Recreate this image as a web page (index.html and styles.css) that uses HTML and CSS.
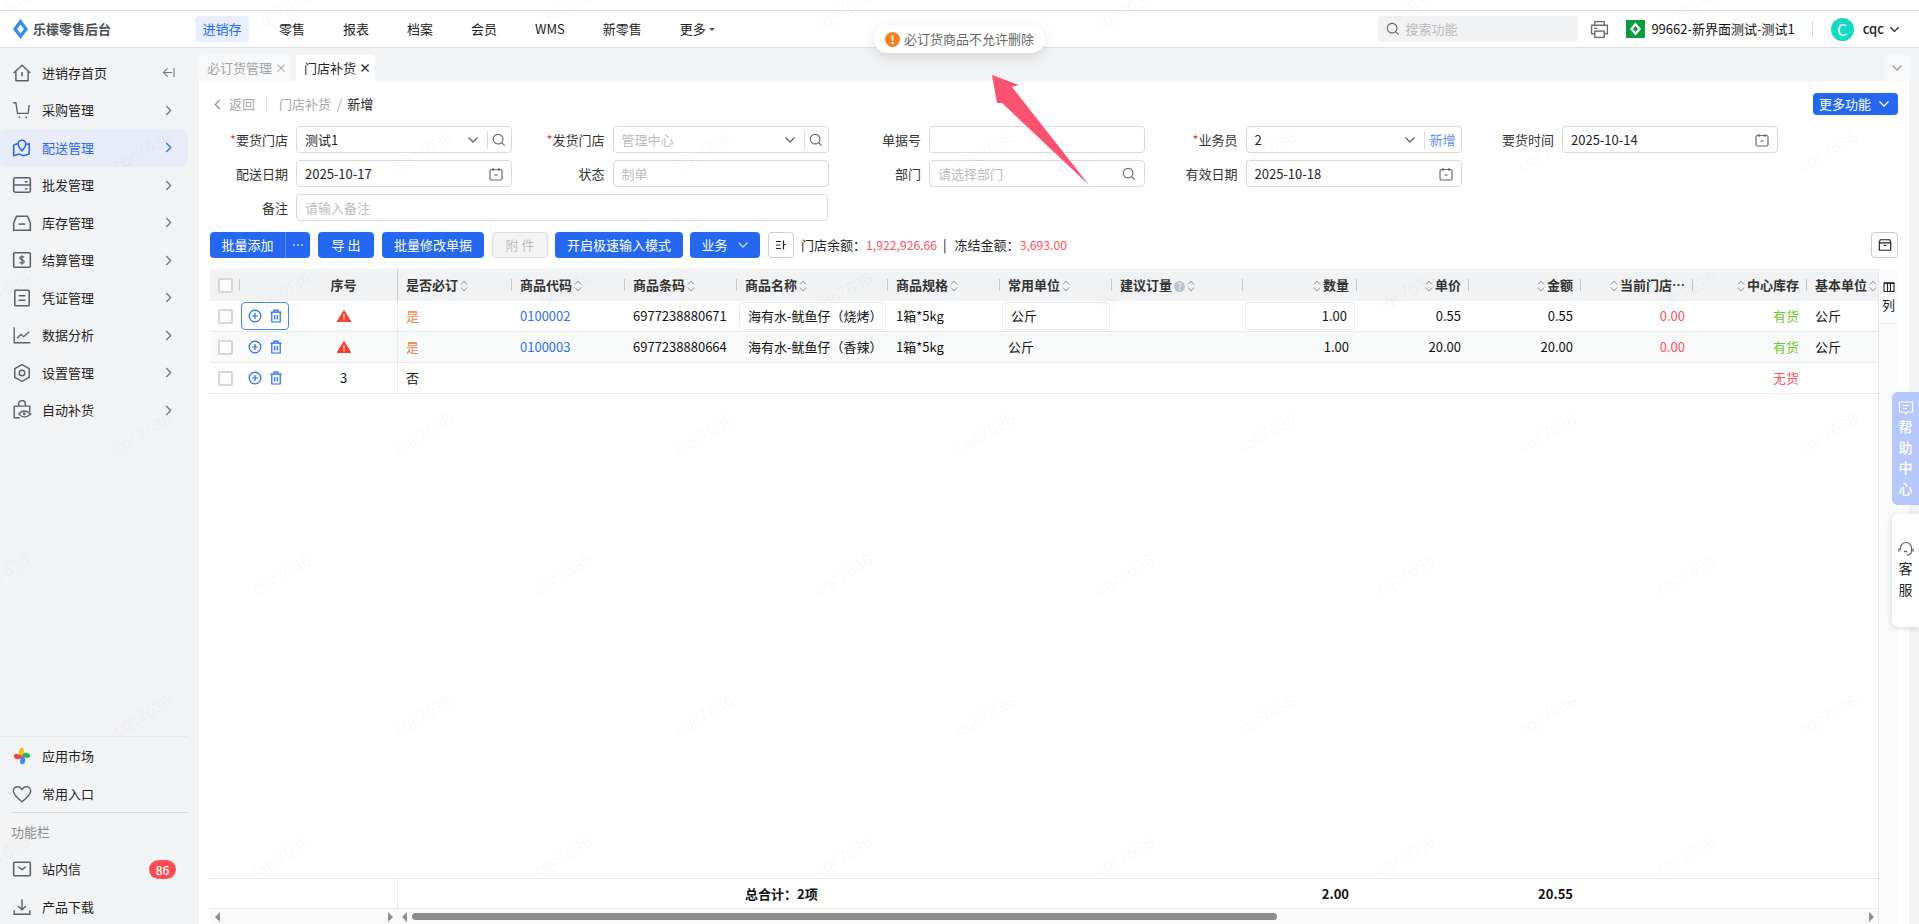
FILE: index.html
```html
<!DOCTYPE html>
<html lang="zh-CN">
<head>
<meta charset="utf-8">
<title>乐檬零售后台</title>
<link rel="stylesheet" href="styles.css">
</head>
<body>
<svg class="sprite" xmlns="http://www.w3.org/2000/svg">
  <symbol id="i-home" viewBox="0 0 18 18"><path d="M1.5 9 9 2l7.5 7M3.5 7.5V16h11V7.5" fill="none" stroke="currentColor" stroke-width="1.3" stroke-linejoin="round"/><path d="M9 8v4" stroke="currentColor" stroke-width="1.4"/></symbol>
  <symbol id="i-cart" viewBox="0 0 18 18"><path d="M1 2.500h2.500l1.500 9.500h9.500l1-7.500" fill="none" stroke="currentColor" stroke-width="1.200"/><path d="M6 15.500h1.500M12 15.500h1.500" stroke="currentColor" stroke-width="1.500"/></symbol>
  <symbol id="i-map" viewBox="0 0 18 18"><path d="M5 5 1.500 6.500V16l5-1.500 4 1.500 5-1.500V5L13 6" fill="none" stroke="currentColor" stroke-width="1.400" stroke-linejoin="round"/><path d="M9 11.500C7 9.500 5.500 8 5.500 5.500a3.500 3.500 0 0 1 7 0C12.500 8 11 9.500 9 11.500Z" fill="none" stroke="currentColor" stroke-width="1.400"/></symbol>
  <symbol id="i-server" viewBox="0 0 18 18"><rect x="1.500" y="2.500" width="15" height="13" rx="1.500" fill="none" stroke="currentColor" stroke-width="1.400"/><path d="M1.500 9h15M11.500 6h2.500M11.500 12.500h2.500" stroke="currentColor" stroke-width="1.300"/></symbol>
  <symbol id="i-box" viewBox="0 0 18 18"><path d="M4 3h10l2.500 6v6.500h-15V9Z" fill="none" stroke="currentColor" stroke-width="1.400" stroke-linejoin="round"/><path d="M6 10h6" stroke="currentColor" stroke-width="1.400"/></symbol>
  <symbol id="i-money" viewBox="0 0 18 18"><rect x="1.500" y="2.500" width="15" height="13" rx="1" fill="none" stroke="currentColor" stroke-width="1.400"/><path d="M11 6.500C10.500 5.800 7 5.300 7 7.200c0 1.800 4 1.300 4 3.300 0 1.800-3.500 1.500-4.200.7M9 4.800v8.400" fill="none" stroke="currentColor" stroke-width="1.100"/></symbol>
  <symbol id="i-doc" viewBox="0 0 18 18"><rect x="2.500" y="2" width="13" height="14" rx="1" fill="none" stroke="currentColor" stroke-width="1.400"/><path d="M6 7h6M6 11h6" stroke="currentColor" stroke-width="1.300"/></symbol>
  <symbol id="i-chart" viewBox="0 0 18 18"><path d="M2 2v14h14.500" fill="none" stroke="currentColor" stroke-width="1.200"/><path d="M4.500 12 8 8.500l2.500 2 5-4.500" fill="none" stroke="currentColor" stroke-width="1.200"/></symbol>
  <symbol id="i-hex" viewBox="0 0 18 18"><path d="M9 1.500 15.500 5v8L9 16.500 2.500 13V5Z" fill="none" stroke="currentColor" stroke-width="1.300" stroke-linejoin="round"/><circle cx="9" cy="9" r="2.500" fill="none" stroke="currentColor" stroke-width="1.300"/></symbol>
  <symbol id="i-bag" viewBox="0 0 18 18"><path d="M6 5V3.500a3 3 0 0 1 6 0V5M2 5.500h14v5M2 5.500V16h5" fill="none" stroke="currentColor" stroke-width="1.300"/><path d="M6 12.500c3-3.500 7-3.500 11 0-4 3.500-8 3.500-11 0Z" fill="none" stroke="currentColor" stroke-width="1.200"/><circle cx="11" cy="12.500" r="1.200" fill="currentColor"/></symbol>
  <symbol id="i-heart" viewBox="0 0 18 18"><path d="M9 16C4 12 1.200 9.500 1.200 6.300 1.200 4 3 2.500 5 2.500c1.700 0 3.100.8 4 2.300.9-1.500 2.300-2.300 4-2.300 2 0 3.800 1.500 3.800 3.800C16.800 9.500 14 12 9 16Z" fill="none" stroke="currentColor" stroke-width="1.300"/></symbol>
  <symbol id="i-mail" viewBox="0 0 18 18"><rect x="1.500" y="3" width="15" height="12" rx="1" fill="none" stroke="currentColor" stroke-width="1.400"/><path d="m5.500 7 3.500 2.500L12.500 7" fill="none" stroke="currentColor" stroke-width="1.300"/></symbol>
  <symbol id="i-down" viewBox="0 0 18 18"><path d="M9 2v9M5.500 8 9 11.500 12.500 8M2 12v3.500h14V12" fill="none" stroke="currentColor" stroke-width="1.300"/></symbol>
  <symbol id="i-chev-r" viewBox="0 0 10 14"><path d="m2.500 2 5 5-5 5" fill="none" stroke="currentColor" stroke-width="1.300"/></symbol>
  <symbol id="i-chev-d" viewBox="0 0 12 12"><path d="m1.500 3.500 4.500 4.500 4.500-4.500" fill="none" stroke="currentColor" stroke-width="1.300"/></symbol>
  <symbol id="i-search" viewBox="0 0 16 16"><circle cx="7" cy="7" r="5.500" fill="none" stroke="currentColor" stroke-width="1.300"/><path d="m11 11 3.500 3.500" stroke="currentColor" stroke-width="1.300"/></symbol>
  <symbol id="i-cal" viewBox="0 0 14 14"><path d="M4 1v3M10 1v3" stroke="currentColor" stroke-width="1.200"/><rect x="1" y="2.500" width="12" height="10.500" rx="1.500" fill="none" stroke="currentColor" stroke-width="1.200"/><path d="M5.500 8h3" stroke="currentColor" stroke-width="1.200"/></symbol>
  <symbol id="i-sort" viewBox="0 0 8 14"><path d="m1 5.500 3-3.500 3 3.500M1 8.500l3 3.500 3-3.500" fill="none" stroke="currentColor" stroke-width="1"/></symbol>
  <symbol id="i-plus" viewBox="0 0 14 14"><circle cx="7" cy="7" r="5.800" fill="none" stroke="currentColor" stroke-width="1.200"/><path d="M4 7h6M7 4v6" stroke="currentColor" stroke-width="1.200"/></symbol>
  <symbol id="i-trash" viewBox="0 0 14 14"><path d="M1.500 3.200h11M5 3V1.200h4V3M2.800 3.200v9.800h8.400V3.200M5.700 6v4.500M8.300 6v4.500" fill="none" stroke="currentColor" stroke-width="1.200"/></symbol>
  <symbol id="i-warn" viewBox="0 0 14 12"><path d="M7 .5 13.800 11.500H.2Z" fill="#f5402c" stroke="#f5402c" stroke-linejoin="round"/><path d="M7 4v4M7 9v1.300" stroke="#fff" stroke-width="1.200"/></symbol>
</svg>

<div class="topstrip"></div>
<header class="header">
  <div class="brand">
    <svg class="brand-logo" viewBox="0 0 15 20"><path d="M7.500 0 15 10l-7.500 10L0 10Z" fill="#2f8cf5"/><path d="M7.500 5.500 11 10l-3.500 4.500L4 10Z" fill="#fff"/></svg>
    <span class="brand-name">乐檬零售后台</span>
  </div>
  <nav class="topnav">
    <a class="topnav-item is-active">进销存</a>
    <a class="topnav-item">零售</a>
    <a class="topnav-item">报表</a>
    <a class="topnav-item">档案</a>
    <a class="topnav-item">会员</a>
    <a class="topnav-item">WMS</a>
    <a class="topnav-item">新零售</a>
    <a class="topnav-item">更多<i class="caret"></i></a>
  </nav>
  <div class="search">
    <svg class="ic-14"><use href="#i-search"/></svg>
    <span>搜索功能</span>
  </div>
  <svg class="print" viewBox="0 0 18 18"><path d="M4.500 5V1.500h9V5M4.500 13H1.500V5h15v8h-3" fill="none" stroke="currentColor" stroke-width="1.300" stroke-linejoin="round"/><rect x="4.500" y="10.500" width="9" height="6" fill="none" stroke="currentColor" stroke-width="1.300"/><path d="M4 7.800h3" stroke="currentColor" stroke-width="1.300"/></svg>
  <svg class="org-logo" viewBox="0 0 19 18"><rect width="19" height="18" fill="#0c9c3e"/><path d="M9.500 2.500 15 9l-5.500 6.500L4 9Z" fill="#fff"/><path d="M9.500 6 12 9l-2.500 3L7 9Z" fill="#0c9c3e"/></svg>
  <span class="org-name">99662-新界面测试-测试1</span>
  <span class="head-div"></span>
  <span class="avatar">C</span>
  <span class="user">cqc</span>
  <svg class="user-chev"><use href="#i-chev-d"/></svg>
</header>

<div class="shell">
  <aside class="sidebar">
    <ul class="menu">
      <li class="menu-item"><svg class="menu-ic"><use href="#i-home"/></svg><span>进销存首页</span><svg class="collapse" viewBox="0 0 14 12"><path d="M6 1.500 1.500 6 6 10.500M1.500 6H11M13 1v10" fill="none" stroke="currentColor" stroke-width="1.200"/></svg></li>
      <li class="menu-item"><svg class="menu-ic"><use href="#i-cart"/></svg><span>采购管理</span><svg class="menu-arrow"><use href="#i-chev-r"/></svg></li>
      <li class="menu-item is-active"><svg class="menu-ic"><use href="#i-map"/></svg><span>配送管理</span><svg class="menu-arrow"><use href="#i-chev-r"/></svg></li>
      <li class="menu-item"><svg class="menu-ic"><use href="#i-server"/></svg><span>批发管理</span><svg class="menu-arrow"><use href="#i-chev-r"/></svg></li>
      <li class="menu-item"><svg class="menu-ic"><use href="#i-box"/></svg><span>库存管理</span><svg class="menu-arrow"><use href="#i-chev-r"/></svg></li>
      <li class="menu-item"><svg class="menu-ic"><use href="#i-money"/></svg><span>结算管理</span><svg class="menu-arrow"><use href="#i-chev-r"/></svg></li>
      <li class="menu-item"><svg class="menu-ic"><use href="#i-doc"/></svg><span>凭证管理</span><svg class="menu-arrow"><use href="#i-chev-r"/></svg></li>
      <li class="menu-item"><svg class="menu-ic"><use href="#i-chart"/></svg><span>数据分析</span><svg class="menu-arrow"><use href="#i-chev-r"/></svg></li>
      <li class="menu-item"><svg class="menu-ic"><use href="#i-hex"/></svg><span>设置管理</span><svg class="menu-arrow"><use href="#i-chev-r"/></svg></li>
      <li class="menu-item"><svg class="menu-ic"><use href="#i-bag"/></svg><span>自动补货</span><svg class="menu-arrow"><use href="#i-chev-r"/></svg></li>
    </ul>
    <div class="side-bottom">
      <div class="bottom-item"><svg class="menu-ic" viewBox="0 0 18 18"><path d="M9 9C5 9 5 2 9 1.500c2.500 0 2 5 0 7.500Z" fill="#fbbc1e"/><path d="M9 9c0-4 7-4 7.500 0 0 2.500-5 2-7.500 0Z" fill="#2fb84f"/><path d="M9 9c4 0 4 7 0 7.500-2.500 0-2-5 0-7.500Z" fill="#3d8bf5"/><path d="M9 9c0 4-7 4-7.500 0 0-2.500 5-2 7.500 0Z" fill="#f0453a"/></svg><span>应用市场</span></div>
      <div class="bottom-item"><svg class="menu-ic"><use href="#i-heart"/></svg><span>常用入口</span></div>
      <div class="bottom-label">功能栏</div>
      <div class="bottom-item"><svg class="menu-ic"><use href="#i-mail"/></svg><span>站内信</span><b class="badge">86</b></div>
      <div class="bottom-item"><svg class="menu-ic"><use href="#i-down"/></svg><span>产品下载</span></div>
    </div>
  </aside>

  <main class="main">
    <div class="tabs">
      <div class="tab">必订货管理<i class="tab-x">×</i></div>
      <div class="tab is-active">门店补货<i class="tab-x">×</i></div>
      <div class="tab-more"><svg class="ic-12"><use href="#i-chev-d"/></svg></div>
    </div>

    <section class="content">
      <div class="crumbs">
        <svg class="crumb-back"><use href="#i-chev-r"/></svg>
        <span class="crumb-muted">返回</span>
        <i class="crumb-div"></i>
        <span class="crumb-muted">门店补货</span>
        <span class="crumb-slash">/</span>
        <span>新增</span>
        <button class="btn btn-more">更多功能<svg class="ic-12"><use href="#i-chev-d"/></svg></button>
      </div>

      <div class="form">
        <div class="field"><label><em>*</em>要货门店</label><div class="input"><span class="val">测试1</span><svg class="ic-12"><use href="#i-chev-d"/></svg><i class="vbar"></i><svg class="ic-14"><use href="#i-search"/></svg></div></div>
        <div class="field"><label><em>*</em>发货门店</label><div class="input"><span class="val ph">管理中心</span><svg class="ic-12"><use href="#i-chev-d"/></svg><i class="vbar"></i><svg class="ic-14"><use href="#i-search"/></svg></div></div>
        <div class="field"><label>单据号</label><div class="input"></div></div>
        <div class="field"><label><em>*</em>业务员</label><div class="input"><span class="val">2</span><svg class="ic-12"><use href="#i-chev-d"/></svg><i class="vbar"></i><a class="add">新增</a></div></div>
        <div class="field"><label>要货时间</label><div class="input"><span class="val">2025-10-14</span><svg class="ic-14 ic-cal"><use href="#i-cal"/></svg></div></div>

        <div class="field"><label>配送日期</label><div class="input"><span class="val">2025-10-17</span><svg class="ic-14 ic-cal"><use href="#i-cal"/></svg></div></div>
        <div class="field"><label>状态</label><div class="input"><span class="val ph">制单</span></div></div>
        <div class="field"><label>部门</label><div class="input"><span class="val ph">请选择部门</span><svg class="ic-14"><use href="#i-search"/></svg></div></div>
        <div class="field"><label>有效日期</label><div class="input"><span class="val">2025-10-18</span><svg class="ic-14 ic-cal"><use href="#i-cal"/></svg></div></div>
        <div class="field-empty"></div>

        <div class="field field-wide"><label>备注</label><div class="input"><span class="val ph">请输入备注</span></div></div>
      </div>

      <div class="toolbar">
        <div class="btn-group"><button class="btn btn-main">批量添加</button><button class="btn btn-dots"><svg class="dots" viewBox="0 0 12 4"><circle cx="2" cy="2" r="1"/><circle cx="6" cy="2" r="1"/><circle cx="10" cy="2" r="1"/></svg></button></div>
        <button class="btn btn-56">导 出</button>
        <button class="btn">批量修改单据</button>
        <button class="btn btn-56 is-disabled">附 件</button>
        <button class="btn tight">开启极速输入模式</button>
        <button class="btn btn-biz tight">业务<svg class="ic-12"><use href="#i-chev-d"/></svg></button>
        <button class="icon-btn"><svg class="ic-12" viewBox="0 0 12 12"><path d="M1 2.500h5M1 6h4M1 9.500h5M8.500 1.500v9M8.500 5.500h2.500" stroke="#222" stroke-width="1.200" fill="none"/></svg></button>
        <div class="balance">门店余额：<span class="red">1,922,926.66</span><b class="pipe">|</b>冻结金额：<span class="red">3,693.00</span></div>
        <button class="icon-btn icon-btn-r"><svg class="ic-14" viewBox="0 0 16 16"><path d="M2.500 2h11l1 3v9h-13V5Z M1.500 5.500h13M6.500 8.500h3" fill="none" stroke="#222" stroke-width="1.300"/></svg></button>
      </div>

      <div class="grid-wrap">
        <div class="grid-area">
          <table class="grid">
            <colgroup>
              <col class="c-check"><col class="c-op"><col class="c-seq"><col class="c-must"><col class="c-code"><col class="c-bar"><col class="c-name"><col class="c-spec"><col class="c-unit"><col class="c-sug"><col class="c-qty"><col class="c-price"><col class="c-amt"><col class="c-store"><col class="c-stock"><col class="c-base">
            </colgroup>
            <thead>
              <tr>
                <th class="has-div"><i class="check"></i></th>
                <th></th>
                <th class="center fixed-end">序号</th>
                <th class="has-div">是否必订<svg class="sort"><use href="#i-sort"/></svg></th>
                <th class="has-div">商品代码<svg class="sort"><use href="#i-sort"/></svg></th>
                <th class="has-div">商品条码<svg class="sort"><use href="#i-sort"/></svg></th>
                <th class="has-div">商品名称<svg class="sort"><use href="#i-sort"/></svg></th>
                <th class="has-div">商品规格<svg class="sort"><use href="#i-sort"/></svg></th>
                <th class="has-div">常用单位<svg class="sort"><use href="#i-sort"/></svg></th>
                <th class="has-div">建议订量<i class="qmark">?</i><svg class="sort"><use href="#i-sort"/></svg></th>
                <th class="has-div right"><svg class="sort"><use href="#i-sort"/></svg>数量</th>
                <th class="has-div right"><svg class="sort"><use href="#i-sort"/></svg>单价</th>
                <th class="has-div right"><svg class="sort"><use href="#i-sort"/></svg>金额</th>
                <th class="has-div right"><svg class="sort"><use href="#i-sort"/></svg>当前门店…</th>
                <th class="has-div right"><svg class="sort"><use href="#i-sort"/></svg>中心库存</th>
                <th>基本单位<svg class="sort"><use href="#i-sort"/></svg></th>
              </tr>
            </thead>
            <tbody>
              <tr>
                <td><i class="check"></i></td>
                <td class="ops"><span class="op-box is-focus"><svg class="ic-14"><use href="#i-plus"/></svg><svg class="ic-14"><use href="#i-trash"/></svg></span></td>
                <td class="center fixed-end"><svg class="warn"><use href="#i-warn"/></svg></td>
                <td class="orange">是</td>
                <td class="link">0100002</td>
                <td>6977238880671</td>
                <td class="boxed"><span class="cell-box">海有水-鱿鱼仔（烧烤）</span></td>
                <td>1箱*5kg</td>
                <td class="boxed"><span class="cell-box">公斤</span></td>
                <td></td>
                <td class="boxed right"><span class="cell-box">1.00</span></td>
                <td class="right">0.55</td>
                <td class="right">0.55</td>
                <td class="right red">0.00</td>
                <td class="right green">有货</td>
                <td>公斤</td>
              </tr>
              <tr class="is-alt">
                <td><i class="check"></i></td>
                <td class="ops"><span class="op-box"><svg class="ic-14"><use href="#i-plus"/></svg><svg class="ic-14"><use href="#i-trash"/></svg></span></td>
                <td class="center fixed-end"><svg class="warn"><use href="#i-warn"/></svg></td>
                <td class="orange">是</td>
                <td class="link">0100003</td>
                <td>6977238880664</td>
                <td class="pad-name">海有水-鱿鱼仔（香辣）</td>
                <td>1箱*5kg</td>
                <td>公斤</td>
                <td></td>
                <td class="right">1.00</td>
                <td class="right">20.00</td>
                <td class="right">20.00</td>
                <td class="right red">0.00</td>
                <td class="right green">有货</td>
                <td>公斤</td>
              </tr>
              <tr>
                <td><i class="check"></i></td>
                <td class="ops"><span class="op-box"><svg class="ic-14"><use href="#i-plus"/></svg><svg class="ic-14"><use href="#i-trash"/></svg></span></td>
                <td class="center fixed-end">3</td>
                <td>否</td>
                <td></td><td></td><td></td><td></td><td></td><td></td><td></td><td></td><td></td><td></td>
                <td class="right red">无货</td>
                <td></td>
              </tr>
            </tbody>
          </table>
          <div class="grid-space"></div>
          <table class="grid grid-foot">
            <colgroup>
              <col class="c-check"><col class="c-op"><col class="c-seq"><col class="c-must"><col class="c-code"><col class="c-bar"><col class="c-name"><col class="c-spec"><col class="c-unit"><col class="c-sug"><col class="c-qty"><col class="c-price"><col class="c-amt"><col class="c-store"><col class="c-stock"><col class="c-base">
            </colgroup>
            <tr>
              <td></td><td></td><td class="fixed-end"></td><td></td><td></td><td></td>
              <td class="total">总合计：2项</td>
              <td></td><td></td><td></td>
              <td class="right">2.00</td>
              <td></td>
              <td class="right">20.55</td>
              <td></td><td></td><td></td>
            </tr>
          </table>
          <div class="hscroll">
            <div class="hscroll-left"><i class="arr-l"></i><i class="arr-r"></i></div>
            <div class="hscroll-right"><i class="arr-l"></i><i class="thumb"></i><i class="arr-r"></i></div>
          </div>
        </div>
        <div class="col-side">
          <div class="col-btn">
            <svg class="ic-12" viewBox="0 0 12 12"><path d="M1 2h10v8.500H1ZM1 2.500h10M4.500 2.500v8M7.500 2.500v8" fill="none" stroke="#222" stroke-width="1.100"/><path d="M1 1.500h10v1.500H1Z" fill="#222"/></svg>
            <span>列</span>
          </div>
        </div>
      </div>
    </section>
  </main>
</div>

<div class="float-help">
  <svg class="ic-16" viewBox="0 0 16 16"><path d="M1.500 2h13v10H9.500L8 14l-1.500-2h-5Z M5 5.500h6M5 8.500h4" fill="none" stroke="#fff" stroke-width="1.200"/></svg>
  <span>帮助中心</span>
</div>
<div class="float-service">
  <svg class="ic-16" viewBox="0 0 16 16"><path d="M2.500 9V7a5.500 5.500 0 0 1 11 0v3c0 2.500-2 4-4.500 4" fill="none" stroke="#5a5f6b" stroke-width="1.200"/><path d="M1 7.500v3M15 7.500v3M6 10.500h3" stroke="#5a5f6b" stroke-width="1.300" fill="none"/></svg>
  <span>客服</span>
</div>

<div class="toast"><i class="toast-ic">!</i>必订货商品不允许删除</div>
<svg class="pointer" viewBox="0 0 110 120"><path d="M2 2 29 12 22 14 99 112 12 30 7 30Z" fill="#fb5270"/></svg>

<div class="marks">
  <div class="marks-row is-shift"><span>cqc7636</span><span>cqc7636</span><span>cqc7636</span><span>cqc7636</span><span>cqc7636</span><span>cqc7636</span><span>cqc7636</span><span>cqc7636</span></div>
  <div class="marks-row"><span>cqc7636</span><span>cqc7636</span><span>cqc7636</span><span>cqc7636</span><span>cqc7636</span><span>cqc7636</span><span>cqc7636</span></div>
  <div class="marks-row is-shift"><span>cqc7636</span><span>cqc7636</span><span>cqc7636</span><span>cqc7636</span><span>cqc7636</span><span>cqc7636</span><span>cqc7636</span><span>cqc7636</span></div>
  <div class="marks-row"><span>cqc7636</span><span>cqc7636</span><span>cqc7636</span><span>cqc7636</span><span>cqc7636</span><span>cqc7636</span><span>cqc7636</span></div>
  <div class="marks-row is-shift"><span>cqc7636</span><span>cqc7636</span><span>cqc7636</span><span>cqc7636</span><span>cqc7636</span><span>cqc7636</span><span>cqc7636</span><span>cqc7636</span></div>
  <div class="marks-row"><span>cqc7636</span><span>cqc7636</span><span>cqc7636</span><span>cqc7636</span><span>cqc7636</span><span>cqc7636</span><span>cqc7636</span></div>
  <div class="marks-row is-shift"><span>cqc7636</span><span>cqc7636</span><span>cqc7636</span><span>cqc7636</span><span>cqc7636</span><span>cqc7636</span><span>cqc7636</span><span>cqc7636</span></div>
</div>
</body>
</html>
```

FILE: styles.css
```css
* { box-sizing: border-box; }
html, body { margin: 0; height: 100%; overflow: hidden; }
body {
  display: flex;
  flex-direction: column;
  position: relative;
  height: 924px;
  font: 13px/18px "Noto Sans CJK SC", "Noto Sans", sans-serif;
  color: #1f2329;
  background: #fff;
}
.sprite { display: none; }
i, em { font-style: normal; }
svg { flex: none; display: block; }
ul { list-style: none; margin: 0; padding: 0; }
button { font: inherit; border: 0; padding: 0; }

.ic-12 { width: 12px; height: 12px; }
.ic-14 { width: 14px; height: 14px; }
.ic-16 { width: 16px; height: 16px; }

/* header */
.topstrip { height: 11px; flex: none; border-bottom: 1px solid #e3e3e3; }
.header {
  flex: none;
  height: 37px;
  display: flex;
  align-items: center;
  padding-right: 19px;
  border-bottom: 1px solid #dedfe1;
}
.brand { width: 195px; display: flex; align-items: center; padding-left: 13px; }
.brand-logo { width: 15px; height: 20px; margin-right: 5px; }
.brand-name { font-weight: 700; color: #4a4e57; }
.topnav { display: flex; gap: 22px; }
.topnav-item {
  display: flex;
  align-items: center;
  height: 26px;
  padding: 0 8px;
  border-radius: 4px;
  color: #222;
}
.topnav-item.is-active { padding: 0 7.500px; color: #2468f2; background: #e8eefd; }
.caret {
  margin-left: 3px;
  border: 3px solid transparent;
  border-top: 3px solid #555;
  border-bottom: 0;
}
.search {
  margin-left: auto;
  width: 200px;
  height: 26px;
  padding-left: 8px;
  display: flex;
  align-items: center;
  gap: 5px;
  border-radius: 3px;
  background: #f1f2f4;
  color: #bbb;
}
.search svg { color: #666; }
.print { width: 19px; height: 19px; margin-left: 12px; color: #666a72; }
.org-logo { width: 19px; height: 18px; margin-left: 17px; }
.org-name { margin-left: 6px; color: #111; }
.head-div { width: 1px; height: 16px; margin-left: 17px; background: #d5d5d5; }
.avatar {
  width: 23px;
  height: 23px;
  margin-left: 18px;
  border-radius: 50%;
  background: #13d8c4;
  color: #fff;
  font-size: 16px;
  line-height: 23px;
  text-align: center;
}
.user { margin-left: 9px; font-weight: 500; }
.user-chev { width: 11px; height: 11px; margin-left: 5px; color: #222; }

/* shell */
.shell { flex: 1; min-height: 0; display: flex; background: #f2f3f5; }
.sidebar {
  width: 199px;
  flex: none;
  display: flex;
  flex-direction: column;
  padding-top: 6px;
  overflow: hidden;
}
.menu { flex: 1; }
.menu-item {
  width: 188px;
  height: 37.500px;
  display: flex;
  align-items: center;
  padding-left: 12px;
  border-radius: 8px;
  color: #222;
}
.menu-item.is-active { color: #2468f2; background: #e8ecf8; }
.menu-ic { width: 20px; height: 20px; margin-right: 10px; color: #5a5f6b; }
.is-active .menu-ic { color: #2468f2; }
.menu-arrow { width: 9px; height: 13px; margin-left: auto; margin-right: 15px; color: #6b6f78; }
.is-active .menu-arrow { color: #2468f2; }
.collapse { width: 13px; height: 11px; margin-left: auto; margin-right: 13px; color: #777; }
.side-bottom { flex: none; width: 188px; margin-bottom: -2px; border-top: 1px solid #e8e9eb; }
.bottom-item {
  height: 38px;
  display: flex;
  align-items: center;
  padding-left: 12px;
  color: #222;
}
.bottom-label {
  height: 38px;
  margin: -1px 0 0 11px;
  padding-top: 10px;
  border-top: 1px solid #d9dadc;
  color: #8c8c8c;
}
.badge {
  margin-left: auto;
  margin-right: 12px;
  width: 27px;
  height: 19px;
  border-radius: 10px;
  background: #ff4d55;
  color: #fff;
  font-size: 12px;
  font-weight: 500;
  line-height: 19px;
  text-align: center;
}

/* main */
.main { flex: 1; min-width: 0; display: flex; flex-direction: column; }
.tabs {
  flex: none;
  height: 33px;
  padding: 7px 9px 0 0;
  display: flex;
  gap: 5px;
}
.tab {
  height: 26px;
  padding: 0 7px 0 8px;
  display: flex;
  align-items: center;
  border-radius: 4px 4px 0 0;
  background: #f7f8fa;
  color: #a3a3a3;
}
.tab.is-active { background: #fff; color: #1f2329; }
.tab-x { width: 9px; margin-left: 3px; font-size: 12px; line-height: 18px; text-align: center; }
.tab.is-active .tab-x { font-weight: 700; }
.tab-more {
  margin-left: auto;
  width: 26px;
  height: 26px;
  display: flex;
  align-items: center;
  justify-content: center;
  border-radius: 4px 4px 0 0;
  background: #f7f8fa;
  color: #999;
}
.content {
  flex: 1;
  min-height: 0;
  margin-right: 10px;
  padding: 12px 11px 0;
  display: flex;
  flex-direction: column;
  background: #fff;
}
.crumbs { flex: none; height: 22px; display: flex; align-items: center; }
.crumb-back { width: 9px; height: 13px; margin: 0 7px 0 3px; color: #888; transform: scaleX(-1); }
.crumb-muted { color: #a6a6a6; }
.crumb-div { width: 1px; height: 14px; margin: 0 12px 0 11px; background: #e3e3e3; }
.crumb-slash { margin: 0 5px 0 6px; color: #a6a6a6; }
.btn {
  height: 26px;
  padding: 0 12px;
  display: inline-flex;
  align-items: center;
  justify-content: center;
  gap: 9px;
  border-radius: 4px;
  background: #2468f2;
  color: #fff;
  flex: none;
  white-space: nowrap;
}
.btn-more { margin-left: auto; height: 22px; width: 85px; padding: 0 0 0 6px; gap: 7px; justify-content: flex-start; }
.btn-56 { width: 56px; padding: 0; }
.is-disabled { background: #f4f4f4; color: #bdbdbd; border: 1px solid #dcdcdc; }
.btn-biz { width: 70px; padding: 0; }
.btn-biz svg { color: #c9d9fb; }
.tight { margin-left: -1px; }

/* form */
.form {
  flex: none;
  margin-top: 11px;
  display: grid;
  grid-template-columns: repeat(5, 316.500px);
  row-gap: 7px;
}
.field { display: flex; align-items: center; }
.field label { width: 78px; margin-right: 8px; text-align: right; color: #333; white-space: nowrap; }
.field em { color: #f5403c; }
.input {
  width: 216px;
  height: 27px;
  padding: 0 5px 0 8px;
  display: flex;
  align-items: center;
  border: 1px solid #d9d9d9;
  border-radius: 4px;
  color: #666;
}
.field-wide { grid-column: span 2; }
.field-wide .input { width: 532px; }
.val { flex: 1; color: #1f2329; white-space: nowrap; }
.val.ph { color: #bbb; }
.val + .ic-14 { margin-right: 3px; }
.vbar { width: 1px; height: 18px; margin: 0 4px 0 8px; background: #d9d9d9; }
.ic-cal { color: #666; }
.add { color: #5f8ff5; }

/* toolbar */
.toolbar { flex: none; margin-top: 11px; height: 26px; display: flex; align-items: center; gap: 8px; }
.btn-group { display: flex; flex: none; }
.btn-main { width: 75px; padding: 0; border-radius: 4px 0 0 4px; }
.btn-dots { width: 25px; padding: 0; border-radius: 0 4px 4px 0; border-left: 1px solid #5b8df5; }
.dots { width: 12px; height: 4px; fill: #c3d5fb; }
.icon-btn {
  width: 26px;
  height: 26px;
  display: flex;
  align-items: center;
  justify-content: center;
  flex: none;
  border: 1px solid #ccc;
  border-radius: 4px;
  background: #fff;
}
.balance { margin-left: -1px; white-space: nowrap; color: #222; }
.balance .red { font-size: 12.200px; }
.red { color: #ff5060; }
.pipe { margin: 0 8px 0 6px; font-weight: 400; color: #111; }
.icon-btn-r { margin-left: auto; width: 27px; }

/* grid */
.grid-wrap { flex: 1; min-height: 0; margin-top: 11px; display: flex; }
.grid-area { flex: 1; min-width: 0; display: flex; flex-direction: column; border-right: 1px solid #e8e8e8; }
.grid {
  flex: none;
  width: 1668px;
  table-layout: fixed;
  border-collapse: separate;
  border-spacing: 0;
}
.c-check { width: 30px; } .c-op { width: 50px; } .c-seq { width: 108px; } .c-must { width: 114px; }
.c-code { width: 113px; } .c-bar { width: 112px; } .c-name { width: 151px; } .c-spec { width: 112px; }
.c-unit { width: 112px; } .c-sug { width: 131px; } .c-qty { width: 114px; } .c-price { width: 112px; }
.c-amt { width: 112px; } .c-store { width: 112px; } .c-stock { width: 114px; } .c-base { width: 71px; }
.grid th, .grid td { padding: 0 8px; white-space: nowrap; overflow: hidden; text-align: left; }
.grid th {
  position: relative;
  height: 32px;
  background: #f1f2f4;
  font-weight: 700;
  color: #333;
}
.grid td { height: 31px; border-bottom: 1px solid #e8e9eb; color: #111; }
.grid .right { text-align: right; }
.grid .center { text-align: center; }
.grid .red { color: #ff5060; }
.is-alt td { background: #f8f9f9; }
.has-div::after {
  content: "";
  position: absolute;
  right: 0;
  top: 10px;
  height: 12px;
  width: 1px;
  background: #c4c7cc;
}
.grid .fixed-end { border-right: 1px solid #e8e9eb; }
.grid th.fixed-end { border-right-color: #c9cbcf; }
.sort { display: inline-block; width: 8px; height: 14px; margin: 0 2px; vertical-align: -3px; color: #8f8f8f; }
.qmark {
  display: inline-block;
  width: 11px;
  height: 11px;
  margin-left: 2px;
  border-radius: 50%;
  background: #bfc3cc;
  color: #fff;
  font-size: 9px;
  font-weight: 400;
  line-height: 11px;
  text-align: center;
  vertical-align: 0;
}
.check {
  display: block;
  width: 15px;
  height: 15px;
  border: 2px solid #d6d6d6;
  border-radius: 2px;
  background: #fff;
}
.grid .ops { padding: 0 0 0 1px; }
.op-box {
  width: 48px;
  height: 28px;
  display: flex;
  align-items: center;
  justify-content: center;
  gap: 7px;
  color: #2468f2;
  border: 1px solid transparent;
  border-radius: 4px;
}
.op-box.is-focus { border-color: #4a86f5; }
.warn { width: 14px; height: 12px; margin: 0 auto; }
.orange { color: #ee8239 !important; }
.link { color: #2e6ff2 !important; }
.green { color: #6fc52c !important; }
.grid .boxed { padding: 0 2px; }
.cell-box {
  display: block;
  height: 28px;
  padding: 0 7px 0 8px;
  line-height: 26px;
  border: 1px solid #e8e9eb;
  border-radius: 4px;
  background: #fff;
  overflow: hidden;
}
.grid .pad-name { padding-left: 11px; padding-right: 0; }
.grid-space { flex: 1; }
.grid-foot td { height: 31px; border-top: 1px solid #e8e9eb; border-bottom: 1px solid #e8e9eb; font-weight: 700; }
.grid-foot .total { overflow: visible; }
.hscroll { flex: none; height: 15px; display: flex; background: #f9f9f9; }
.hscroll-left { width: 188px; display: flex; align-items: center; justify-content: space-between; padding: 0 5px; }
.hscroll-right { flex: 1; display: flex; align-items: center; padding: 0 4px; }
.arr-l { width: 0; height: 0; border: 5px solid transparent; border-left: 0; border-right: 5px solid #8e8e8e; }
.arr-r { width: 0; height: 0; border: 5px solid transparent; border-right: 0; border-left: 5px solid #8e8e8e; }
.thumb { width: 865px; height: 7px; margin-left: 5px; margin-right: auto; border-radius: 4px; background: #8c8c8c; }
.col-side { width: 19px; flex: none; background: #f9fafc; }
.col-btn {
  height: 55px;
  padding-top: 12px;
  display: flex;
  flex-direction: column;
  align-items: center;
  gap: 3px;
  border-bottom: 1px solid #e8e9eb;
  color: #222;
}

/* floating */
.float-help, .float-service {
  position: absolute;
  right: 0;
  width: 27px;
  height: 113px;
  display: flex;
  flex-direction: column;
  align-items: center;
  border-radius: 6px 0 0 6px;
}
.float-help { top: 392px; padding-top: 8px; gap: 0; background: #b5c8fb; color: #fff; font-weight: 500; }
.float-service { top: 514px; padding-top: 27px; background: #fff; box-shadow: 0 1px 6px rgba(0, 0, 0, .16); color: #222; }
.float-help span, .float-service span { width: 14px; font-size: 14px; line-height: 20.600px; word-break: break-all; text-align: center; }
.float-service span { margin-top: 1px; }
.toast {
  position: absolute;
  left: 874px;
  top: 25px;
  width: 171px;
  height: 28px;
  display: flex;
  align-items: center;
  padding-left: 11px;
  border-radius: 14px;
  background: #fff;
  box-shadow: 0 4px 14px rgba(0, 0, 0, .12);
  color: #666;
  white-space: nowrap;
}
.toast-ic {
  width: 15px;
  height: 15px;
  margin-right: 4px;
  border-radius: 50%;
  background: #f5821f;
  color: #fff;
  font-size: 11px;
  font-weight: 700;
  line-height: 15px;
  text-align: center;
  flex: none;
}
.pointer { position: absolute; left: 990px; top: 73px; width: 110px; height: 120px; }
.marks { position: absolute; left: 0; top: -60px; width: 1919px; height: 984px; overflow: hidden; pointer-events: none; }
.marks-row { height: 141px; display: flex; padding-left: 1.500px; }
.marks-row.is-shift { padding-left: 0; margin-left: -140px; }
.marks-row span {
  flex: none;
  width: 281px;
  height: 141px;
  text-align: center;
  font: 17px/141px "Liberation Sans", sans-serif;
  color: rgba(0, 0, 0, .04);
  transform: rotate(-30deg);
}
```
